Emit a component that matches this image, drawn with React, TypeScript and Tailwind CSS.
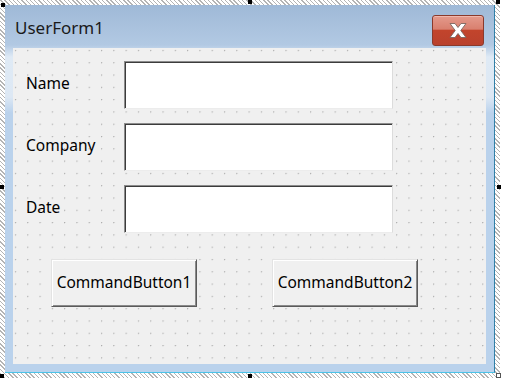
import React from "react";

const fields = ["Name", "Company", "Date"];

function CloseButton() {
    return (
        <div className="w-[52px] h-[31px] mt-[10px] rounded-[3px] border border-[#8a3a2c] bg-[linear-gradient(to_bottom,#e49a8c_0%,#d9806f_45%,#c2442c_50%,#b9412d_100%)] flex items-center justify-center shadow-[inset_0_1px_0_#f0b8ad]">
            <svg width="22" height="17" viewBox="0 0 22 17">
                <path
                    d="M3 1.5 L8 1.5 L11 5.5 L14 1.5 L19 1.5 L13.8 8.5 L19 15.5 L14 15.5 L11 11.5 L8 15.5 L3 15.5 L8.2 8.5 Z"
                    fill="#ffffff"
                    stroke="#7a6660"
                    strokeWidth="0.9"
                    strokeLinejoin="round"
                />
            </svg>
        </div>
    );
}

function CommandButton({ label }: { label: string }) {
    return (
        <div className="w-[146px] h-[48px] border border-t-[#e3e3e3] border-l-[#e3e3e3] border-b-[#5a5a5a] border-r-[#5a5a5a] shadow-[inset_1px_1px_0_#ffffff,inset_-1px_-1px_0_#8a8a8a] bg-[#f0f0f0] flex items-center justify-center text-[15.5px] text-black">
            {label}
        </div>
    );
}

const handle = "absolute w-[4px] h-[4px] bg-black";

export default function App() {
    return (
        <div className="w-[512px] h-[384px] bg-white font-['Noto_Sans',sans-serif] relative">
            {/* selection frame */}
            <div className="w-[500px] h-[378px] p-[5px] bg-[repeating-linear-gradient(45deg,#b4b4b4_0px,#b4b4b4_1px,#ffffff_1px,#ffffff_3px)]">
                <div className="w-[490px] h-[368px] border-r border-r-[#2f7fa8] border-b border-b-[#4cc3e8] bg-[linear-gradient(to_bottom,#9fb9d7_0px,#b2c9e3_40px,#dfeaf5_52px,#dde8f4_92px,#bad2ec_108px,#bad2ec_100%)] flex flex-col">
                    {/* title bar */}
                    <div className="h-[43px] flex justify-between pl-[10px] pr-[10px]">
                        <span className="text-[17px] text-[#1a1a1a] pt-[10px] leading-[25px]">UserForm1</span>
                        <CloseButton />
                    </div>
                    {/* client area */}
                    <div className="ml-[8px] w-[473px] h-[316px] bg-[#f0f0f0] bg-[radial-gradient(circle_at_2.5px_2.5px,#a9a9a9_0.6px,transparent_0.9px)] bg-size-[12.3px_12.3px] flex flex-col pt-[13px]">
                        <div className="flex flex-col gap-[14px]">
                            {fields.map((f) => (
                                <div key={f} className="flex items-center">
                                    <span className="w-[111px] pl-[13px] text-[15.5px] text-black -mt-[2px]">{f}</span>
                                    <div className="w-[269px] h-[48px] bg-white border border-t-[#8c8c8c] border-l-[#8c8c8c] border-b-[#ececec] border-r-[#dcdcdc] shadow-[inset_1px_1px_0_#3c3c3c,inset_-1px_-1px_0_#ffffff]" />
                                </div>
                            ))}
                        </div>
                        <div className="flex mt-[26px] pl-[38px] gap-[75px]">
                            <CommandButton label="CommandButton1" />
                            <CommandButton label="CommandButton2" />
                        </div>
                    </div>
                </div>
            </div>
            {/* sizing handles */}
            <div className={`${handle} left-[1px] top-[3px]`} />
            <div className={`${handle} left-[248px] top-0`} />
            <div className={`${handle} left-[496px] top-0`} />
            <div className={`${handle} left-0 top-[185px]`} />
            <div className={`${handle} left-[497px] top-[185px]`} />
            <div className={`${handle} left-0 top-[374px]`} />
            <div className={`${handle} left-[248px] top-[374px]`} />
            <div className="absolute w-[5px] h-[5px] left-[496px] top-[373px] bg-white border border-[#555]" />
        </div>
    );
}
